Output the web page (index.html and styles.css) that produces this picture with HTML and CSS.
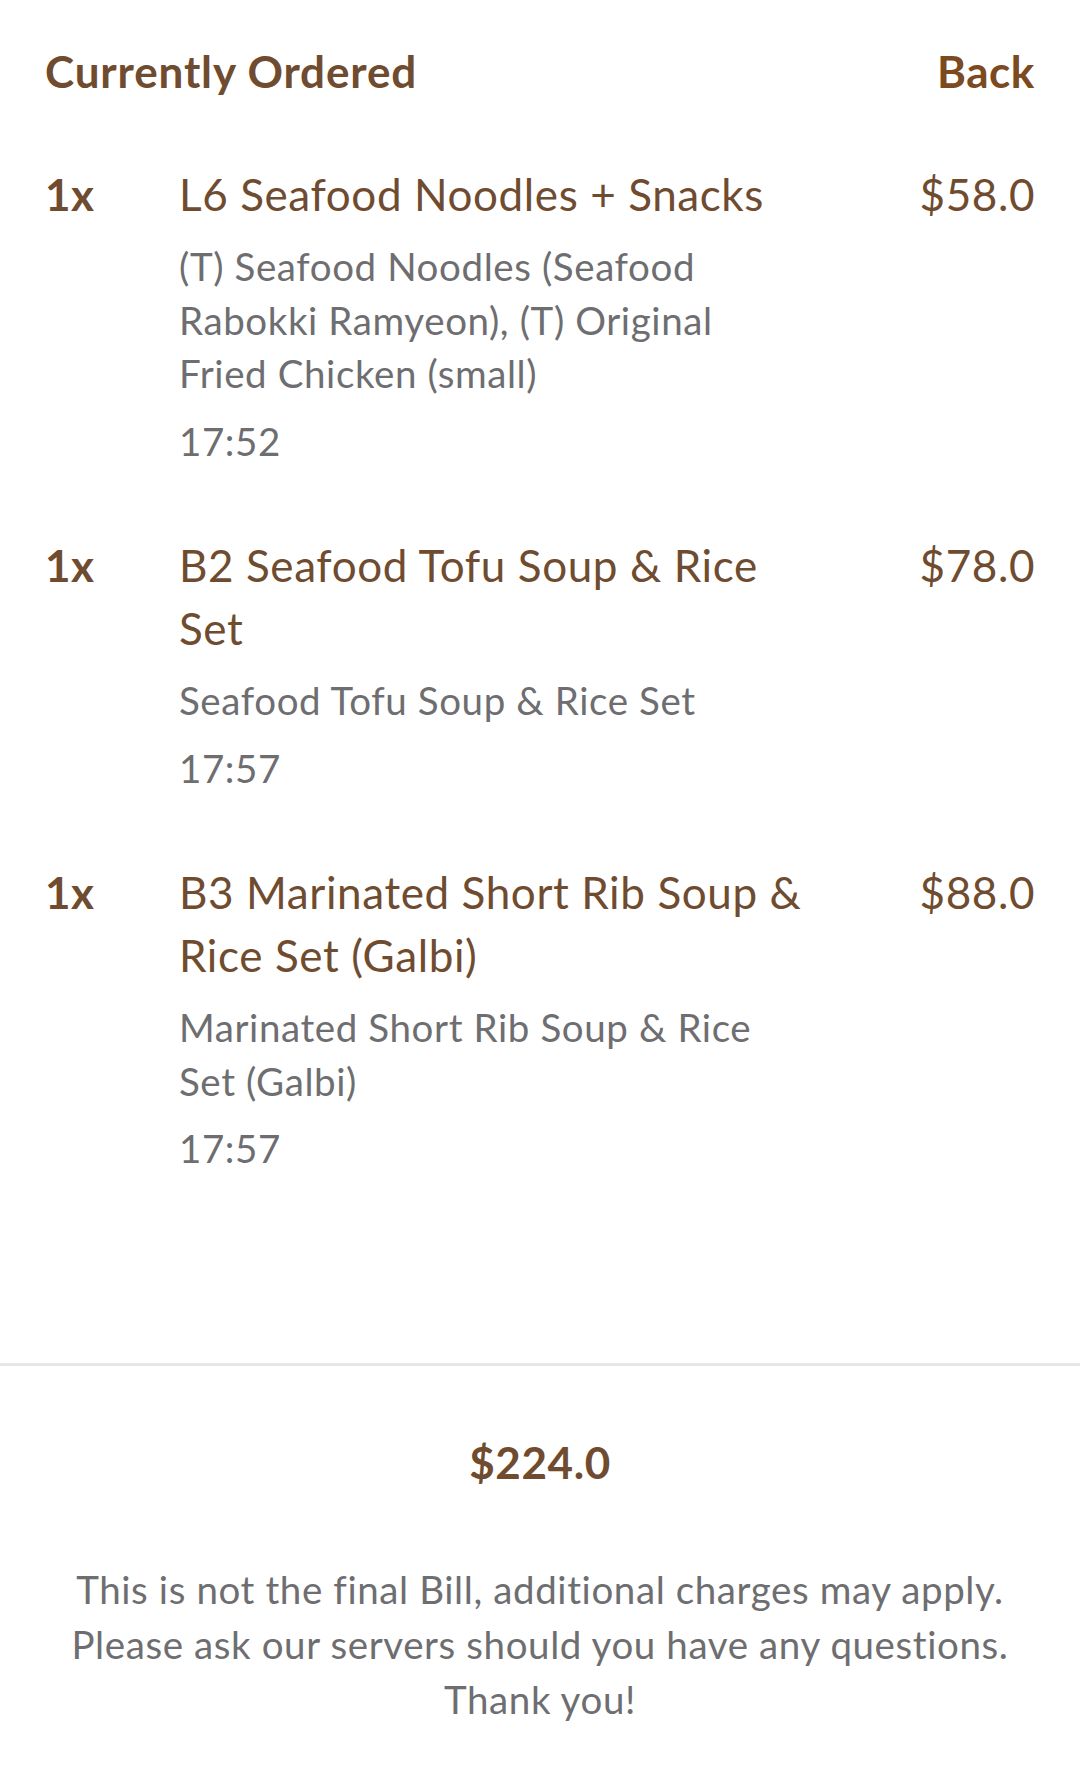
FILE: index.html
```html
<!DOCTYPE html>
<html lang="en">
<head>
    <meta charset="UTF-8">
    <meta name="viewport" content="width=device-width, initial-scale=1.0">
    <title>Currently Ordered</title>
    <link rel="stylesheet" href="styles.css">
</head>
<body>
    <div class="page">
        <header class="top-bar">
            <h1 class="title">Currently Ordered</h1>
            <a href="#" class="back-link">Back</a>
        </header>

        <main class="order-list">
            <div class="order-item">
                <span class="qty">1x</span>
                <div class="item-info">
                    <div class="item-name">L6 Seafood Noodles + Snacks</div>
                    <div class="item-desc">(T) Seafood Noodles (Seafood Rabokki Ramyeon), (T) Original Fried Chicken (small)</div>
                    <div class="item-time">17:52</div>
                </div>
                <span class="price">$58.0</span>
            </div>

            <div class="order-item">
                <span class="qty">1x</span>
                <div class="item-info">
                    <div class="item-name">B2 Seafood Tofu Soup &amp; Rice Set</div>
                    <div class="item-desc">Seafood Tofu Soup &amp; Rice Set</div>
                    <div class="item-time">17:57</div>
                </div>
                <span class="price">$78.0</span>
            </div>

            <div class="order-item">
                <span class="qty">1x</span>
                <div class="item-info">
                    <div class="item-name">B3 Marinated Short Rib Soup &amp; Rice Set (Galbi)</div>
                    <div class="item-desc">Marinated Short Rib Soup &amp; Rice Set (Galbi)</div>
                    <div class="item-time">17:57</div>
                </div>
                <span class="price">$88.0</span>
            </div>
        </main>

        <footer class="summary">
            <div class="total">$224.0</div>
            <p class="notice">This is not the final Bill, additional charges may apply.<br>Please ask our servers should you have any questions.<br>Thank you!</p>
        </footer>
    </div>
</body>
</html>
```

FILE: styles.css
```css
:root {
    --brown: #6f4c30;
    --brown-strong: #7b4a20;
    --grey: #6e6e71;
    --divider: #e7e7ea;
}

body {
    font-family: 'Lato', 'Noto Sans', sans-serif;
    margin: 0;
    padding: 0;
    letter-spacing: 0.6px;
    background-color: #ffffff;
    color: var(--brown);
}

.page {
    display: flex;
    flex-direction: column;
    min-height: 100vh;
}

.top-bar {
    display: flex;
    justify-content: space-between;
    align-items: baseline;
    padding: 41px 45px 0;
}

.title {
    margin: 0;
    font-size: 44px;
    line-height: 60px;
    font-weight: 700;
    letter-spacing: 0.85px;
    color: var(--brown);
}

.back-link {
    font-size: 44px;
    line-height: 60px;
    font-weight: 700;
    color: var(--brown-strong);
    text-decoration: none;
}

.order-list {
    flex: 1;
    padding: 62px 45px 0;
}

.order-item {
    display: flex;
    align-items: flex-start;
    margin-bottom: 66px;
}

.qty {
    flex: none;
    width: 134px;
    font-size: 44px;
    line-height: 63px;
    font-weight: 700;
}

.item-info {
    width: 626px;
}

.item-name {
    font-size: 44px;
    line-height: 63px;
}

.item-desc,
.item-time {
    margin-top: 14px;
    font-size: 38.5px;
    line-height: 53.5px;
    color: var(--grey);
}

.item-desc {
    padding-right: 30px;
}

.price {
    margin-left: auto;
    font-size: 44px;
    line-height: 63px;
}

.summary {
    border-top: 3px solid var(--divider);
    padding: 66px 45px 58px;
    text-align: center;
}

.total {
    font-size: 44px;
    line-height: 60px;
    font-weight: 700;
}

.notice {
    margin: 70px 0 0;
    font-size: 38.5px;
    line-height: 55px;
    color: var(--grey);
}
```
